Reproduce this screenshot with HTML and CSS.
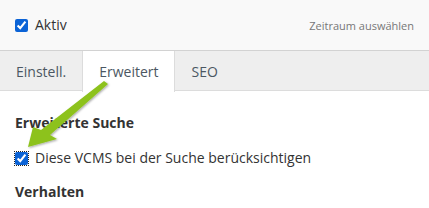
FILE: index.html
```html
<!DOCTYPE html>
<html lang="de">
<head>
<meta charset="utf-8">
<link rel="stylesheet" href="styles.css">
</head>
<body>
<div class="topbar">
  <label class="check"><input type="checkbox" checked> <span>Aktiv</span></label>
  <span class="range">Zeitraum auswählen</span>
</div>
<div class="tabs">
  <div class="tab">Einstell.</div>
  <div class="tab active">Erweitert</div>
  <div class="tab last">SEO</div>
</div>
<div class="content">
  <h3 class="heading">Erweiterte Suche</h3>
  <label class="check row"><input type="checkbox" class="focused" checked> <span>Diese VCMS bei der Suche berücksichtigen</span></label>
  <h3 class="heading h2">Verhalten</h3>
</div>
<svg class="arrow" width="429" height="208" viewBox="0 0 429 208">
  <defs>
    <filter id="sh" x="-20%" y="-20%" width="140%" height="140%">
      <feDropShadow dx="1" dy="1" stdDeviation="1.2" flood-color="#000" flood-opacity="0.35"/>
    </filter>
  </defs>
  <polygon points="104,81 108,84 50,135 57,139 28,147 33,127 41,130" fill="#8dc21f" filter="url(#sh)"/>
</svg>
</body>
</html>
```

FILE: styles.css
```css
* { box-sizing: border-box; }
html, body { margin: 0; padding: 0; }
body {
  width: 429px;
  height: 208px;
  overflow: hidden;
  background: #fff;
  font-family: "Open Sans", "DejaVu Sans", sans-serif;
  font-size: 14px;
  color: #333;
  position: relative;
}
.topbar {
  height: 51px;
  background: #f9f9f9;
  border-bottom: 1px solid #d2d2d2;
  display: flex;
  align-items: center;
  justify-content: space-between;
  padding: 0 15px;
}
.check {
  display: flex;
  align-items: center;
  gap: 7px;
  line-height: 20px;
}
.check input {
  margin: 0;
  width: 13px;
  height: 13px;
  accent-color: #0b63d6;
}
.check input.focused {
  outline: 1px dotted #222;
  outline-offset: 0;
}
.range {
  font-size: 11px;
  color: #777;
}
.tabs {
  height: 40px;
  background: #eeeeee;
  border-bottom: 1px solid #dcdcdc;
  display: flex;
}
.tab {
  padding: 0 16px;
  border-right: 1px solid #dcdcdc;
  display: flex;
  align-items: center;
  color: #4b5762;
  height: 40px;
}
.tab.active {
  background: #fff;
  height: 41px;
  margin-left: -1px;
  border-left: 1px solid #dcdcdc;
}
.tab.last {
  border-right: 0;
}
.content {
  padding: 22px 15px 0;
}
.heading {
  margin: 0;
  font-size: 14px;
  font-weight: 700;
  line-height: 20px;
  color: #333;
}
.row {
  margin-top: 15px;
}
.h2 {
  margin-top: 14px;
}
.arrow {
  position: absolute;
  left: 0;
  top: 0;
  pointer-events: none;
}
```
